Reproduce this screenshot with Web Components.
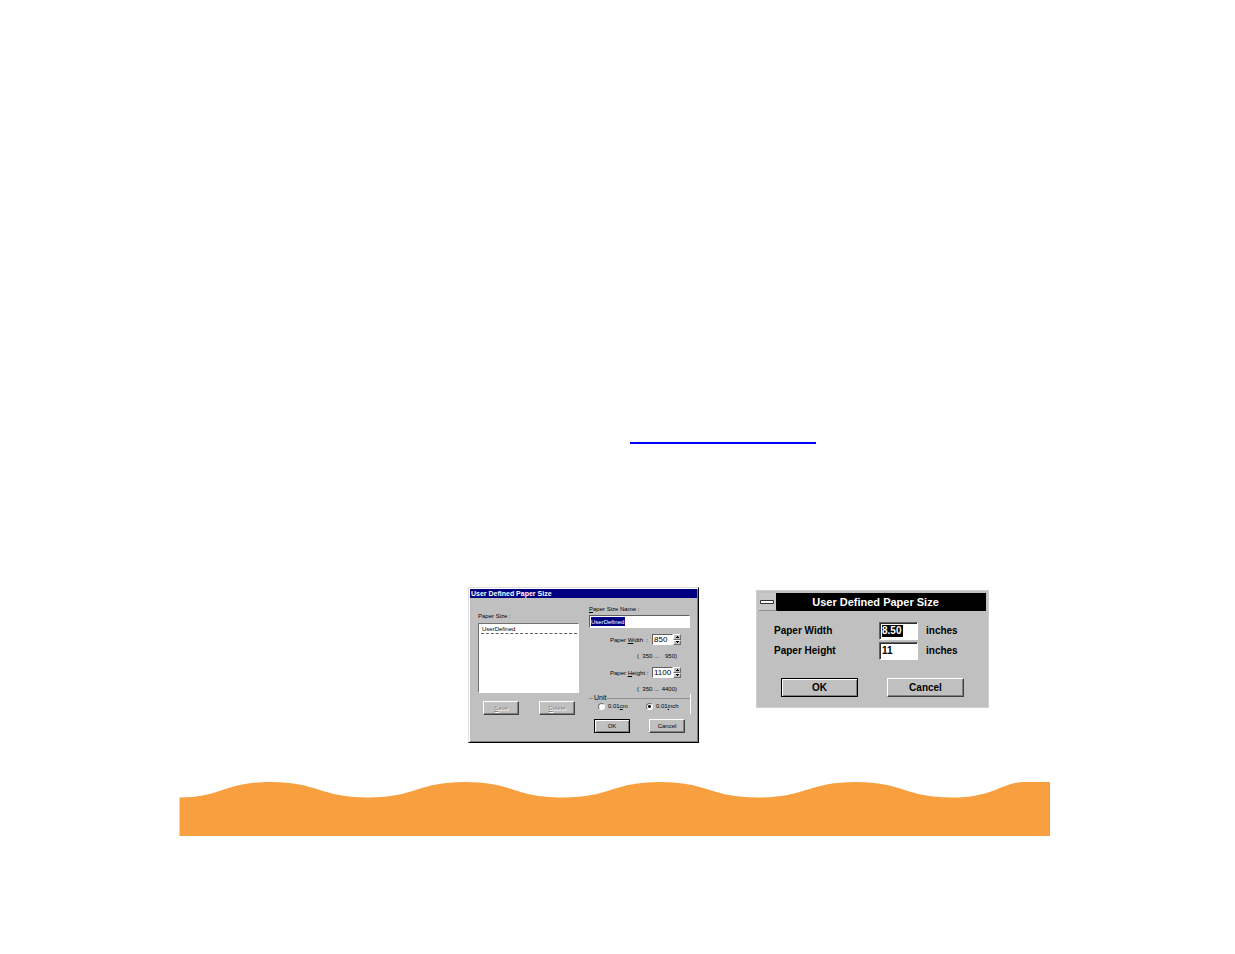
<!DOCTYPE html>
<html lang="en">
<head>
<meta charset="utf-8">
<title>User Defined Paper Size</title>
<style>
body { margin: 0; background: #fff; font-family: "Liberation Sans", Arial, sans-serif; color: #000; }
</style>
</head>
<body>
<manual-page>
  <section-link slot="link"></section-link>
  <paper-list-dialog></paper-list-dialog>
  <paper-size-dialog></paper-size-dialog>
  <wave-footer slot="footer"></wave-footer>
</manual-page>
<script>
const define = (name, html, setup) => customElements.define(name, class extends HTMLElement {
  constructor() {
    super();
    this.attachShadow({ mode: "open" }).innerHTML = html;
    if (setup) setup(this, this.shadowRoot);
  }
});

define("manual-page", `
<style>
:host { display: flex; flex-direction: column; padding: 442px 185px 118px 179px; }
.dialogs { display: flex; align-items: flex-start; gap: 57px; margin: 143px 0 39px 289px; }
</style>
<slot name="link"></slot>
<main class="dialogs"><slot></slot></main>
<slot name="footer"></slot>`);

define("section-link", `
<style>
:host { display: block; margin-left: 451px; }
a { display: block; width: 186px; height: 2px; background: #00f; }
</style>
<a href="#paper-size" aria-label="Paper size"></a>`);

define("wave-footer", `
<style>
:host { display: block; }
svg { display: block; width: 100%; height: 54px; }
</style>
<svg viewBox="0 0 871 54" preserveAspectRatio="none" aria-hidden="true">
<path fill="#f8a03f" d="M.5 15.5C43 15.5 45 0 92 0C139 0 141 15.5 189 15.5C237 15.5 238 0 286 0C334 0 335 15.5 384 15.5C432 15.5 433 0 481 0C529 0 531 15.5 579 15.5C627 15.5 629 0 677 0C724 0 726 15.5 773 15.5C815 15.5 823 0 845 0H871V54H.5Z"/>
</svg>`);

define("push-button", `
<style>
:host { display: block; }
button { display: block; box-sizing: border-box; width: 100%; height: var(--button-height, 14px); padding: 0; border: 1px solid; border-color: #fff #404040 #404040 #fff; box-shadow: inset -1px -1px #808080; border-radius: 0; background: #c0c0c0; color: #000; font: inherit; line-height: 1; }
:host([primary]) button { border-color: #000; box-shadow: inset 1px 1px #fff, inset -1px -1px #808080; }
:host([disabled]) button { color: #888; text-shadow: 1px 1px #fff; }
</style>
<button type="button"><slot></slot></button>`, (host, root) => {
  root.querySelector("button").disabled = host.hasAttribute("disabled");
});

define("spin-field", `
<style>
:host { display: flex; height: 11px; }
input { box-sizing: border-box; width: 21px; height: 11px; padding: 0 0 0 1px; border: 1px solid; border-color: #606060 #fff #fff #606060; border-radius: 0; background: #fff; font: inherit; font-size: 8px; color: #000; }
.arrows { display: flex; flex-direction: column; width: 8px; }
button { flex: 1; display: flex; align-items: center; justify-content: center; padding: 0; border: 1px solid; border-color: #fff #707070 #707070 #fff; border-radius: 0; background: #c0c0c0; min-height: 0; }
svg { display: block; width: 3px; height: 2px; }
</style>
<input type="text">
<div class="arrows">
<button type="button" aria-label="Increase"><svg viewBox="0 0 3 2"><path d="M1 0h1v1h1v1H0V1h1z"/></svg></button>
<button type="button" aria-label="Decrease"><svg viewBox="0 0 3 2"><path d="M0 0h3v1H2v1H1V1H0z"/></svg></button>
</div>`, (host, root) => {
  const input = root.querySelector("input");
  input.value = host.getAttribute("value");
  input.setAttribute("aria-label", host.getAttribute("label"));
});

define("paper-list-dialog", `
<style>
:host { display: block; box-sizing: border-box; width: 231px; border: 1px solid; border-color: #dfdfdf #000 #000 #dfdfdf; box-shadow: inset 1px 1px #fff, inset -1px -1px #808080; background: #c0c0c0; padding: 1px; font-size: 6px; line-height: 8px; white-space: nowrap; }
h2 { margin: 0; padding-left: 1px; height: 9px; background: #000080; color: #fff; font: bold 7px/9px "Liberation Sans", Arial, sans-serif; }
form { display: grid; grid-template-columns: 101px 102px; gap: 10px; padding: 0 8px 8px; }
.left { padding-top: 14px; }
.right { padding-top: 7px; }
label { display: block; }
ul { list-style: none; box-sizing: border-box; height: 70px; margin: 3px 0 8px; padding: 1px 1px 1px 2px; border: 1px solid; border-color: #707070 #fff #fff #707070; background: #fff; }
li { padding-left: 1px; border-bottom: 1px dashed #606060; }
.buttons { display: flex; gap: 20px; padding-left: 5px; }
.right .buttons { gap: 19px; margin-top: 5px; }
push-button { width: 36px; }
.name { box-sizing: border-box; display: flex; align-items: center; width: 101px; height: 13px; margin-top: 2px; padding: 0 1px; border: 1px solid; border-color: #606060 #fff #fff #606060; background: #fff; }
.name input { box-sizing: border-box; width: 34px; height: 9px; padding: 0; border: 0; background: #000080; color: #fff; font: inherit; }
.size { display: flex; align-items: center; justify-content: space-between; width: 71px; margin: 6px 0 0 21px; }
.range { display: flex; justify-content: space-between; width: 40px; margin: 7px 0 0 48px; }
.range + .size { margin-top: 7px; }
fieldset { margin: 1px 0 0; padding: 0 0 0 9px; border: 0; border-right: 1px solid #fff; height: 20px; }
.legend { display: flex; align-items: center; gap: 1px; margin: 0 0 0 -9px; font-size: 7px; }
.legend::before, .legend::after { content: ""; height: 1px; background: #909090; width: 4px; }
.legend::after { flex: 1; }
.radios { display: flex; gap: 12px; }
.radios label { display: flex; align-items: center; gap: 3px; width: 36px; }
.radios input { appearance: none; box-sizing: border-box; width: 7px; height: 7px; margin: 0; border: 1px solid; border-color: #707070 #fff #fff #707070; border-radius: 50%; background: #fff; }
.radios input:checked { background: radial-gradient(circle, #000 1px, #fff 2px); }
</style>
<h2>User Defined Paper Size</h2>
<form>
<div class="left">
<label id="list-label">Paper Size :</label>
<ul aria-labelledby="list-label"><li>UserDefined</li></ul>
<div class="buttons"><push-button disabled><u>S</u>ave</push-button><push-button disabled><u>D</u>elete</push-button></div>
</div>
<div class="right">
<label for="name"><u>P</u>aper Size Name :</label>
<div class="name"><input id="name" type="text" value="UserDefined"></div>
<div class="size"><span>Paper <u>W</u>idth &nbsp;:</span><spin-field value="850" label="Paper Width"></spin-field></div>
<div class="range"><span>( &nbsp;350 ...</span><span>950)</span></div>
<div class="size"><span>Paper <u>H</u>eight :</span><spin-field value="1100" label="Paper Height"></spin-field></div>
<div class="range"><span>( &nbsp;350 ...</span><span>4400)</span></div>
<fieldset aria-label="Unit"><div class="legend">Unit</div>
<div class="radios"><label><input type="radio" name="unit"><span>0.01<u>c</u>m</span></label><label><input type="radio" name="unit" checked><span>0.01<u>i</u>nch</span></label></div></fieldset>
<div class="buttons"><push-button primary>OK</push-button><push-button>Cancel</push-button></div>
</div>
</form>`);

define("paper-size-dialog", `
<style>
:host { display: block; box-sizing: border-box; width: 233px; margin-top: 3px; padding: 2px; border: 1px solid #d0d0d0; background: #c0c0c0; font: bold 10px/12px "Liberation Sans", Arial, sans-serif; white-space: nowrap; --button-height: 19px; }
header { display: flex; height: 18px; }
header button { display: flex; align-items: center; justify-content: center; width: 18px; padding: 0 2px 0 0; border: 0; border-right: 1px solid #000; border-bottom: 1px solid #909090; border-radius: 0; background: #c8c8c8; }
svg { display: block; width: 14px; height: 4px; }
h2 { flex: 1; margin: 0; background: #000; color: #fff; font: bold 11px/18px "Liberation Sans", Arial, sans-serif; text-align: center; padding-right: 12px; }
.fields { display: grid; grid-template-columns: 105px 39px 1fr; row-gap: 2px; align-items: center; padding: 11px 0 0 15px; }
.fields span { padding-left: 8px; }
.box { box-sizing: border-box; display: flex; align-items: center; height: 18px; border: 1px solid; border-color: #606060 #fff #fff #606060; box-shadow: inset 1px 1px #303030; background: #fff; padding-left: 2px; }
input { box-sizing: border-box; width: 21px; height: 12px; padding: 0; border: 0; background: none; font: inherit; color: #000; }
#width { background: #000; color: #fff; }
.buttons { display: flex; gap: 29px; padding: 18px 0 8px 22px; }
push-button { width: 77px; }
</style>
<header><button type="button" aria-label="Window menu"><svg viewBox="0 0 14 4"><path fill="#fff" stroke="#303030" d="M.5.5h13v3H.5z"/></svg></button><h2>User Defined Paper Size</h2></header>
<form>
<div class="fields">
<label for="width">Paper Width</label><div class="box"><input id="width" type="text" value="8.50"></div><span>inches</span>
<label for="height">Paper Height</label><div class="box"><input id="height" type="text" value="11"></div><span>inches</span>
</div>
<div class="buttons"><push-button primary>OK</push-button><push-button>Cancel</push-button></div>
</form>`);
</script>
</body>
</html>
